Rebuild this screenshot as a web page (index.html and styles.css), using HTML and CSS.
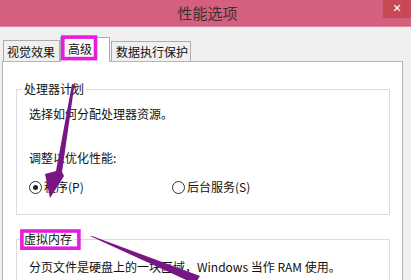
FILE: index.html
```html
<!DOCTYPE html>
<html>
    <head>
        <meta charset="utf-8">
        <title>性能选项</title>
        <link rel="stylesheet" href="styles.css">
    </head>
    <body>
        <div class="window">
            <div class="titlebar">
                <div></div>
                <div class="title">性能选项</div>
                <div class="close">✕</div>
            </div>
            <div class="content">
                <div class="tabs">
                    <div class="tab tab_visual">视觉效果</div>
                    <div class="tab tab_advanced selected">高级</div>
                    <div class="tab tab_dep">数据执行保护</div>
                </div>
                <div class="panel">
                    <fieldset class="group cpu">
                        <legend>处理器计划</legend>
                        <div class="line">选择如何分配处理器资源。</div>
                        <div class="line spaced">调整以优化性能:</div>
                        <div class="radios">
                            <div class="radio checked"><span class="dot"></span>程序(P)</div>
                            <div class="radio"><span class="dot"></span>后台服务(S)</div>
                        </div>
                    </fieldset>
                    <fieldset class="group memory">
                        <legend>虚拟内存</legend>
                        <div class="line">分页文件是硬盘上的一块区域，Windows 当作 RAM 使用。</div>
                    </fieldset>
                </div>
            </div>
        </div>

        <!-- annotations drawn over the dialog -->
        <svg class="marks" width="411" height="280" viewBox="0 0 411 280">
            <rect x="62.8" y="37.1" width="32.7" height="21.5" fill="none" stroke="#e81cdc" stroke-width="3.6"/>
            <rect x="21.9" y="231" width="57" height="17.2" fill="none" stroke="#e81cdc" stroke-width="3.6"/>
            <polygon points="72,84 74.5,84.5 62,172 64,176 50,198 45,174 56,171" fill="#781686"/>
            <polygon points="90,236 92,236 200,276 195,284" fill="#781686"/>
        </svg>
    </body>
</html>
```

FILE: styles.css
```css
html, body {
    margin: 0;
    height: 280px;
    overflow: hidden;
}

body {
    font-family: "Noto Sans CJK SC", "Noto Sans", sans-serif;
    font-size: 12px;
    line-height: 16px;
    color: #111;
    background-color: #f0f0f0;
    position: relative;
}

.titlebar {
    height: 26px;
    background-color: #d55f7e;
    display: grid;
    grid-template-columns: 1fr auto 1fr;
    border-bottom: 1px solid #dd8aa0;
}

.title {
    font-size: 15px;
    line-height: 26px;
    color: #3a3034;
    padding-left: 4px;
}

.close {
    justify-self: end;
    width: 28px;
    height: 18px;
    background-color: #c54a55;
    color: #fff;
    font-family: "DejaVu Sans", sans-serif;
    font-size: 11px;
    font-weight: bold;
    line-height: 17px;
    text-align: center;
}

.tabs {
    display: flex;
    align-items: flex-end;
    margin-top: 9px;
    padding-left: 3px;
    height: 25px;
    position: relative;
    z-index: 1;
}

.tab {
    border: 1px solid #acacac;
    border-bottom: none;
    background-color: #f0f0f0;
    line-height: 19px;
    height: 19px;
    padding: 0 4px 0 3px;
}

.tab_visual {
    padding-top: 1px;
}

.tab_advanced {
    height: 24px;
    line-height: 22px;
    padding: 0 17px 0 7px;
    margin-bottom: -1px;
    background-color: #fff;
}

.tab_dep {
    margin-left: 1px;
    padding: 0 2px 0 4px;
}

.panel {
    margin: 0 8px 0 2px;
    height: 200px;
    overflow: hidden;
    background-color: #fff;
    border: 1px solid #b5b5b5;
    border-bottom: none;
    padding: 19px 12px 0 13px;
}

.group {
    margin: 0;
    border: 1px solid #dcdcdc;
    padding: 9px 12px 19px 12px;
}

.group legend {
    padding: 0 2px;
    margin-left: -7px;
    line-height: 16px;
}

.spaced {
    margin-top: 28px;
}

.radios {
    display: grid;
    grid-template-columns: 143px auto;
    margin-top: 13px;
}

.radio {
    display: flex;
    align-items: center;
    gap: 2px;
}

.dot {
    width: 11px;
    height: 11px;
    border: 1px solid #333;
    border-radius: 50%;
    display: flex;
    align-items: center;
    justify-content: center;
}

.radio.checked .dot::after {
    content: "";
    width: 5px;
    height: 5px;
    border-radius: 50%;
    background-color: #222;
}

.memory {
    margin-top: 16px;
    padding-top: 12px;
}

.marks {
    position: absolute;
    top: 0;
    left: 0;
    z-index: 2;
    pointer-events: none;
}
```
